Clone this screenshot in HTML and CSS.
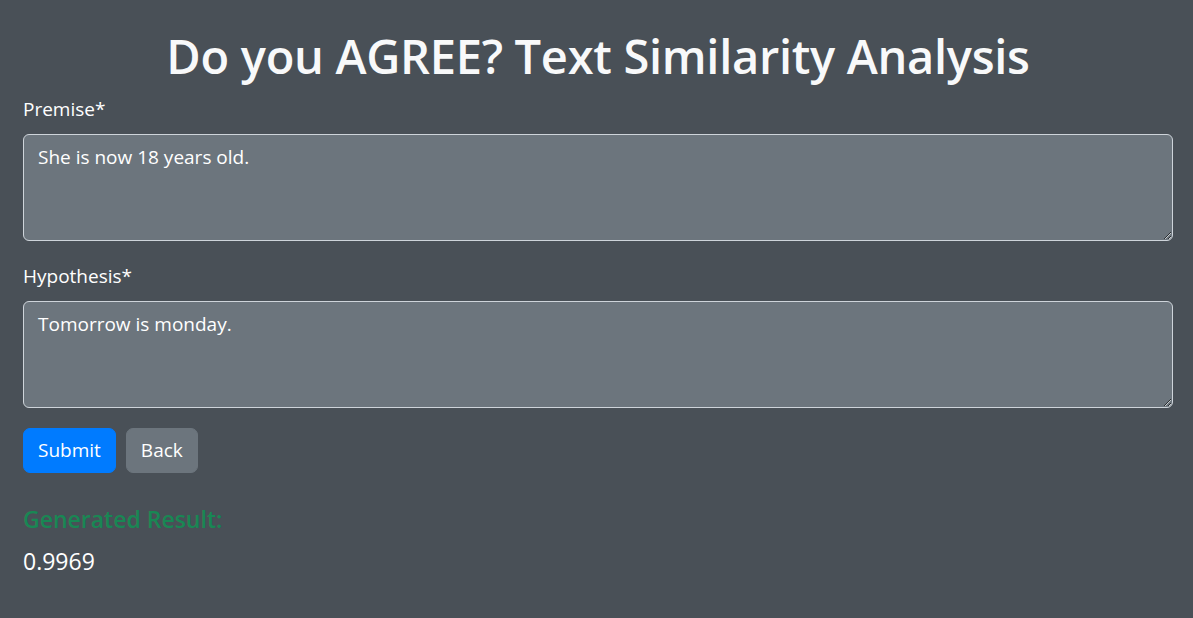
FILE: index.html
```html
<!DOCTYPE html>
<html lang="en">
<head>
<meta charset="utf-8">
<title>Do you AGREE? Text Similarity Analysis</title>
<link rel="stylesheet" href="styles.css">
</head>
<body>
<main class="page">
  <h1 class="title">Do you AGREE? Text Similarity Analysis</h1>
  <form class="form">
    <div class="field">
      <label class="label" for="premise">Premise*</label>
      <textarea class="input" id="premise" rows="3">She is now 18 years old.</textarea>
    </div>
    <div class="field">
      <label class="label" for="hypothesis">Hypothesis*</label>
      <textarea class="input" id="hypothesis" rows="3">Tomorrow is monday.</textarea>
    </div>
    <div class="actions">
      <button type="button" class="btn btn-primary">Submit</button>
      <button type="button" class="btn btn-secondary">Back</button>
    </div>
  </form>
  <section class="result">
    <h5 class="result-title">Generated Result:</h5>
    <p class="result-value">0.9969</p>
  </section>
</main>
</body>
</html>
```

FILE: styles.css
```css
html, body {
  margin: 0;
  padding: 0;
}

body {
  background: #495057;
  color: #ffffff;
  font-family: "Open Sans", "Noto Sans", "DejaVu Sans", sans-serif;
  font-size: 19px;
  line-height: 1.5;
}

.page {
  padding: 26px 20px 0 23px;
}

.title {
  margin: 0 0 8px;
  font-size: 47px;
  font-weight: 600;
  line-height: 60px;
  text-align: center;
  color: #f8f9fa;
  letter-spacing: -0.3px;
}

.form {
  display: flex;
  flex-direction: column;
}

.field {
  display: flex;
  flex-direction: column;
  margin-bottom: 20px;
}

.label {
  line-height: 30px;
  margin-bottom: 10px;
}

.input {
  box-sizing: border-box;
  height: 107px;
  padding: 7px 14px;
  border: 1px solid #ced4da;
  border-radius: 6px;
  background: #6c757d;
  color: #ffffff;
  font: inherit;
  line-height: 30px;
  resize: vertical;
  outline: none;
}

.actions {
  display: flex;
  gap: 10px;
}

.btn {
  box-sizing: border-box;
  height: 45px;
  padding: 0 14px;
  border: 1px solid transparent;
  border-radius: 7px;
  font: inherit;
  color: #ffffff;
  cursor: pointer;
}

.btn-primary {
  background: #007bff;
  border-color: #007bff;
}

.btn-secondary {
  background: #6c757d;
  border-color: #6c757d;
}

.result {
  display: flex;
  flex-direction: column;
}

.result-title {
  margin: 31px 0 12px;
  font-size: 23px;
  font-weight: 600;
  line-height: 30px;
  color: #198754;
}

.result-value {
  margin: 0;
  font-size: 23px;
  line-height: 30px;
}
```
